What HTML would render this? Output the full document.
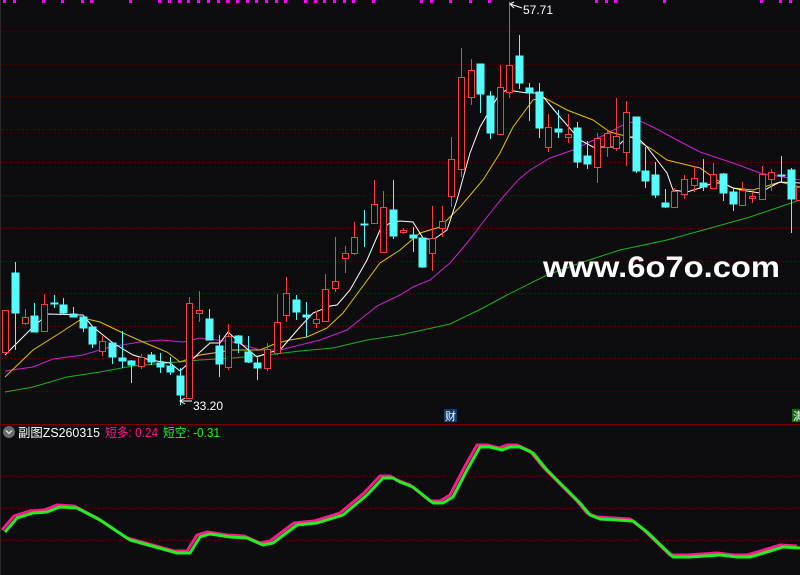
<!DOCTYPE html>
<html><head><meta charset="utf-8"><style>
html,body{margin:0;padding:0;background:#0d0d10;}
svg{display:block}
text{font-family:"Liberation Sans","Noto Sans CJK SC",sans-serif}
</style></head><body>
<svg width="800" height="575" viewBox="0 0 800 575" xmlns="http://www.w3.org/2000/svg">
<rect width="800" height="575" fill="#0d0d10"/>
<line x1="0.5" y1="0" x2="0.5" y2="575" stroke="#2a2a2a"/>
<g stroke="#6e0000" stroke-dasharray="1 3" stroke-width="1">
<line x1="2" y1="31.5" x2="800" y2="31.5"/><line x1="2" y1="64.5" x2="800" y2="64.5"/>
<line x1="2" y1="96.5" x2="800" y2="96.5"/><line x1="2" y1="129.5" x2="800" y2="129.5"/>
<line x1="2" y1="162.5" x2="800" y2="162.5"/><line x1="2" y1="195.5" x2="800" y2="195.5"/>
<line x1="2" y1="228.5" x2="800" y2="228.5"/><line x1="2" y1="261.5" x2="800" y2="261.5"/>
<line x1="2" y1="293.5" x2="800" y2="293.5"/><line x1="2" y1="326.5" x2="800" y2="326.5"/>
<line x1="2" y1="358.5" x2="800" y2="358.5"/><line x1="2" y1="391.5" x2="800" y2="391.5"/>
<line x1="2" y1="476.5" x2="800" y2="476.5"/><line x1="2" y1="508.5" x2="800" y2="508.5"/>
<line x1="2" y1="540.5" x2="800" y2="540.5"/>
</g>
<line x1="0" y1="424.5" x2="800" y2="424.5" stroke="#7a0000"/>
<g fill="#ff00ff">
<rect x="3" y="0" width="3" height="3"/><rect x="13" y="0" width="3" height="3"/><rect x="42" y="0" width="3" height="3"/><rect x="61" y="0" width="3" height="3"/><rect x="81" y="0" width="3" height="3"/><rect x="90" y="0" width="3" height="3"/><rect x="129" y="0" width="3" height="3"/><rect x="158" y="0" width="3" height="3"/><rect x="168" y="0" width="3" height="3"/><rect x="178" y="0" width="3" height="3"/><rect x="187" y="0" width="3" height="3"/><rect x="197" y="0" width="3" height="3"/><rect x="207" y="0" width="3" height="3"/><rect x="217" y="0" width="3" height="3"/><rect x="226" y="0" width="3" height="3"/><rect x="236" y="0" width="3" height="3"/><rect x="246" y="0" width="3" height="3"/><rect x="255" y="0" width="3" height="3"/><rect x="265" y="0" width="3" height="3"/><rect x="275" y="0" width="3" height="3"/><rect x="284" y="0" width="3" height="3"/><rect x="304" y="0" width="3" height="3"/><rect x="314" y="0" width="3" height="3"/><rect x="323" y="0" width="3" height="3"/><rect x="333" y="0" width="3" height="3"/><rect x="343" y="0" width="3" height="3"/><rect x="352" y="0" width="3" height="3"/><rect x="372" y="0" width="3" height="3"/>
<rect x="420" y="0" width="3" height="3"/><rect x="430" y="0" width="3" height="3"/><rect x="449" y="0" width="3" height="3"/><rect x="469" y="0" width="3" height="3"/><rect x="488" y="0" width="3" height="3"/><rect x="595" y="0" width="3" height="3"/><rect x="605" y="0" width="3" height="3"/><rect x="614" y="0" width="3" height="3"/><rect x="663" y="0" width="3" height="3"/><rect x="760" y="0" width="3" height="3"/><rect x="779" y="0" width="3" height="3"/><rect x="789" y="0" width="3" height="3"/>
</g>

<g fill="none" stroke-width="1">
<polyline stroke="#20b020" points="5,392 33,387 67,377 100,372 133,366 167,363 200,360 233,358 267,355 300,351 333,348 367,340 400,335 450,324 483,308 507,295 547,275 583,262 620,250 667,240 707,229 750,217 800,200"/>
<polyline stroke="#d020d0" points="5,371 33,367 53,359 83,355 110,347 140,342 160,340 183,342 200,338 233,342 260,350 280,350 300,345 320,340 347,330 377,306 400,295 413,287 430,280 450,263 467,243 487,217 503,197 518,180 530,170 550,158 573,150 600,137 627,123 640,121 653,127 677,140 700,152 733,163 760,173 800,180"/>
<polyline stroke="#e6c000" points="5,377 33,350 60,333 83,318 100,322 123,333 143,342 167,352 180,362 200,355 220,352 233,350 260,350 277,343 290,340 307,337 327,328 343,313 360,290 380,263 400,250 420,233 440,227 460,207 483,180 500,153 513,127 533,100 543,97 567,110 593,120 610,132 633,138 653,150 667,160 683,164 700,168 720,182 733,188 753,190 767,186 780,182 800,187"/>
<polyline stroke="#ffffff" points="5,355 17,343 33,327 48,314 83,315 93,327 113,343 133,355 150,360 170,363 180,371 190,362 200,352 210,343 220,343 228,332 240,343 257,357 267,353 280,350 300,327 313,313 330,306 337,305 350,290 367,260 380,230 390,223 400,221 413,222 423,238 433,240 447,230 457,200 470,153 480,127 490,110 500,93 507,90 527,93 540,93 560,117 580,140 593,147 617,147 627,137 637,137 647,147 657,160 667,173 673,190 687,192 700,188 713,183 723,183 733,188 747,191 760,193 770,187 780,182 800,183"/>
</g>

<g stroke-width="1">
<g stroke="#ff3c3c" fill="#0d0d10">
<rect x="2.5" y="310.5" width="6" height="42"/>
<line x1="25.5" y1="309" x2="25.5" y2="325"/><rect x="22.5" y="317.5" width="6" height="6"/>
<line x1="44.5" y1="294" x2="44.5" y2="331"/><rect x="41.5" y="304.5" width="6" height="27"/>
<line x1="102.5" y1="336" x2="102.5" y2="356"/><rect x="99.5" y="341.5" width="6" height="10"/>
<line x1="141.5" y1="354" x2="141.5" y2="369"/><rect x="138.5" y="357.5" width="6" height="9"/>
<line x1="189.5" y1="297" x2="189.5" y2="398"/><rect x="186.5" y="303.5" width="6" height="95"/>
<line x1="199.5" y1="291" x2="199.5" y2="322"/><rect x="196.5" y="310.5" width="6" height="3"/>
<line x1="228.5" y1="324" x2="228.5" y2="370"/><rect x="225.5" y="336.5" width="6" height="31"/>
<line x1="267.5" y1="343" x2="267.5" y2="371"/><rect x="264.5" y="349.5" width="6" height="19"/>
<line x1="277.5" y1="294" x2="277.5" y2="355"/><rect x="274.5" y="322.5" width="6" height="31"/>
<line x1="286.5" y1="277" x2="286.5" y2="322"/><rect x="283.5" y="293.5" width="6" height="22"/>
<line x1="316.5" y1="311" x2="316.5" y2="328"/><rect x="313.5" y="319.5" width="6" height="4"/>
<line x1="325.5" y1="274" x2="325.5" y2="322"/><rect x="322.5" y="289.5" width="6" height="32"/>
<line x1="335.5" y1="237" x2="335.5" y2="292"/><rect x="332.5" y="281.5" width="6" height="7"/>
<line x1="345.5" y1="246" x2="345.5" y2="273"/><rect x="342.5" y="253.5" width="6" height="5"/>
<line x1="354.5" y1="222" x2="354.5" y2="255"/><rect x="351.5" y="237.5" width="6" height="16"/>
<line x1="374.5" y1="180" x2="374.5" y2="223"/><rect x="371.5" y="204.5" width="6" height="19"/>
<line x1="383.5" y1="191" x2="383.5" y2="252"/><rect x="380.5" y="207.5" width="6" height="45"/>
<line x1="403.5" y1="228" x2="403.5" y2="234"/><rect x="400.5" y="230.5" width="6" height="2"/>
<line x1="432.5" y1="206" x2="432.5" y2="271"/><rect x="429.5" y="238.5" width="6" height="15"/>
<line x1="442.5" y1="206" x2="442.5" y2="237"/><rect x="439.5" y="221.5" width="6" height="7"/>
<line x1="451.5" y1="137" x2="451.5" y2="207"/><rect x="448.5" y="159.5" width="6" height="37"/>
<line x1="461.5" y1="48" x2="461.5" y2="177"/><rect x="458.5" y="77.5" width="6" height="92"/>
<line x1="471.5" y1="59" x2="471.5" y2="105"/><rect x="468.5" y="70.5" width="6" height="27"/>
<line x1="500.5" y1="65" x2="500.5" y2="135"/><rect x="497.5" y="87.5" width="6" height="47"/>
<line x1="509.5" y1="2" x2="509.5" y2="98"/><rect x="506.5" y="65.5" width="6" height="27"/>
<line x1="548.5" y1="114" x2="548.5" y2="152"/><rect x="545.5" y="127.5" width="6" height="20"/>
<line x1="568.5" y1="114" x2="568.5" y2="143"/><rect x="565.5" y="134.5" width="6" height="3"/>
<line x1="597.5" y1="133" x2="597.5" y2="183"/><rect x="594.5" y="138.5" width="6" height="29"/>
<line x1="607.5" y1="131" x2="607.5" y2="157"/><rect x="604.5" y="133.5" width="6" height="14"/>
<line x1="616.5" y1="98" x2="616.5" y2="151"/><rect x="613.5" y="136.5" width="6" height="12"/>
<line x1="626.5" y1="101" x2="626.5" y2="166"/><rect x="623.5" y="112.5" width="6" height="40"/>
<line x1="674.5" y1="188" x2="674.5" y2="207"/><rect x="671.5" y="191.5" width="6" height="16"/>
<line x1="684.5" y1="175" x2="684.5" y2="199"/><rect x="681.5" y="179.5" width="6" height="15"/>
<line x1="694.5" y1="166" x2="694.5" y2="192"/><rect x="691.5" y="178.5" width="6" height="7"/>
<line x1="713.5" y1="163" x2="713.5" y2="188"/><rect x="710.5" y="174.5" width="6" height="14"/>
<line x1="742.5" y1="182" x2="742.5" y2="206"/><rect x="739.5" y="190.5" width="6" height="15"/>
<line x1="752.5" y1="192" x2="752.5" y2="203"/><rect x="749.5" y="196.5" width="6" height="2"/>
<line x1="762.5" y1="166" x2="762.5" y2="200"/><rect x="759.5" y="174.5" width="6" height="25"/>
<line x1="771.5" y1="169" x2="771.5" y2="191"/><rect x="768.5" y="172.5" width="6" height="7"/>
<rect x="796.5" y="187.5" width="6" height="13"/>
</g>
<g stroke="#54fcfc" fill="#54fcfc">
<line x1="15.5" y1="262" x2="15.5" y2="350"/><rect x="12" y="273" width="7" height="40"/>
<line x1="34.5" y1="303" x2="34.5" y2="332"/><rect x="31" y="316" width="7" height="16"/>
<line x1="54.5" y1="295" x2="54.5" y2="308"/><rect x="51" y="303" width="7" height="1"/>
<line x1="63.5" y1="298" x2="63.5" y2="315"/><rect x="60" y="305" width="7" height="8"/>
<line x1="73.5" y1="307" x2="73.5" y2="317"/><rect x="70" y="314" width="7" height="3"/>
<line x1="83.5" y1="315" x2="83.5" y2="332"/><rect x="80" y="317" width="7" height="11"/>
<line x1="92.5" y1="327" x2="92.5" y2="348"/><rect x="89" y="327" width="7" height="17"/>
<line x1="112.5" y1="343" x2="112.5" y2="364"/><rect x="109" y="343" width="7" height="14"/>
<line x1="122.5" y1="331" x2="122.5" y2="368"/><rect x="119" y="358" width="7" height="3"/>
<line x1="131.5" y1="360" x2="131.5" y2="383"/><rect x="128" y="361" width="7" height="4"/>
<line x1="151.5" y1="352" x2="151.5" y2="365"/><rect x="148" y="355" width="7" height="7"/>
<line x1="160.5" y1="353" x2="160.5" y2="373"/><rect x="157" y="363" width="7" height="4"/>
<line x1="170.5" y1="357" x2="170.5" y2="375"/><rect x="167" y="366" width="7" height="6"/>
<line x1="180.5" y1="368" x2="180.5" y2="405"/><rect x="177" y="376" width="7" height="19"/>
<line x1="209.5" y1="309" x2="209.5" y2="340"/><rect x="206" y="319" width="7" height="21"/>
<line x1="219.5" y1="335" x2="219.5" y2="377"/><rect x="216" y="346" width="7" height="18"/>
<line x1="238.5" y1="335" x2="238.5" y2="353"/><rect x="235" y="336" width="7" height="7"/>
<line x1="248.5" y1="336" x2="248.5" y2="363"/><rect x="245" y="352" width="7" height="10"/>
<line x1="257.5" y1="358" x2="257.5" y2="380"/><rect x="254" y="363" width="7" height="5"/>
<line x1="296.5" y1="295" x2="296.5" y2="320"/><rect x="293" y="300" width="7" height="12"/>
<line x1="306.5" y1="302" x2="306.5" y2="337"/><rect x="303" y="315" width="7" height="2"/>
<line x1="364.5" y1="210" x2="364.5" y2="247"/><rect x="361" y="224" width="7" height="1"/>
<line x1="393.5" y1="180" x2="393.5" y2="239"/><rect x="390" y="210" width="7" height="26"/>
<line x1="413.5" y1="227" x2="413.5" y2="252"/><rect x="410" y="235" width="7" height="3"/>
<line x1="422.5" y1="238" x2="422.5" y2="268"/><rect x="419" y="238" width="7" height="29"/>
<line x1="480.5" y1="64" x2="480.5" y2="113"/><rect x="477" y="64" width="7" height="30"/>
<line x1="490.5" y1="91" x2="490.5" y2="139"/><rect x="487" y="96" width="7" height="37"/>
<line x1="519.5" y1="35" x2="519.5" y2="89"/><rect x="516" y="56" width="7" height="27"/>
<line x1="529.5" y1="83" x2="529.5" y2="121"/><rect x="526" y="88" width="7" height="5"/>
<line x1="539.5" y1="83" x2="539.5" y2="138"/><rect x="536" y="92" width="7" height="36"/>
<line x1="558.5" y1="110" x2="558.5" y2="138"/><rect x="555" y="129" width="7" height="3"/>
<line x1="577.5" y1="122" x2="577.5" y2="168"/><rect x="574" y="128" width="7" height="34"/>
<line x1="587.5" y1="141" x2="587.5" y2="169"/><rect x="584" y="156" width="7" height="8"/>
<line x1="636.5" y1="117" x2="636.5" y2="173"/><rect x="633" y="117" width="7" height="54"/>
<line x1="645.5" y1="147" x2="645.5" y2="188"/><rect x="642" y="171" width="7" height="10"/>
<line x1="655.5" y1="162" x2="655.5" y2="198"/><rect x="652" y="175" width="7" height="20"/>
<line x1="665.5" y1="189" x2="665.5" y2="208"/><rect x="662" y="203" width="7" height="4"/>
<line x1="703.5" y1="159" x2="703.5" y2="191"/><rect x="700" y="183" width="7" height="4"/>
<line x1="723.5" y1="173" x2="723.5" y2="201"/><rect x="720" y="174" width="7" height="19"/>
<line x1="733.5" y1="188" x2="733.5" y2="211"/><rect x="730" y="192" width="7" height="12"/>
<line x1="781.5" y1="156" x2="781.5" y2="182"/><rect x="778" y="175" width="7" height="1"/>
<line x1="791.5" y1="168" x2="791.5" y2="233"/><rect x="788" y="170" width="7" height="29"/>
</g>
</g>

<g stroke="#ffffff" fill="none" stroke-width="1">
<polyline points="514,2 510,4 514,8"/><line x1="510" y1="4" x2="522" y2="8"/>
<polyline points="185,404 180,401 185,398"/><line x1="180" y1="401" x2="192" y2="401"/>
</g>
<text x="523" y="14" font-size="12" fill="#ffffff">57.71</text>
<text x="193" y="410" font-size="12" fill="#ffffff">33.20</text>
<rect x="444" y="409" width="13" height="13" fill="#103c6e"/>
<text x="445" y="420" font-size="11" fill="#ffffff">财</text>
<rect x="792" y="409" width="10" height="13" fill="#106a10"/>
<text x="793" y="420" font-size="11" fill="#ffffff">满</text>

<text x="543" y="277" font-size="30" font-weight="bold" fill="#ffffff" textLength="237" lengthAdjust="spacingAndGlyphs">www.6o7o.com</text>

<circle cx="9" cy="432" r="6" fill="#6a6a6a"/>
<polyline points="6,430.5 9,433.5 12,430.5" fill="none" stroke="#e0e0e0" stroke-width="1.3"/>
<text x="18" y="437" font-size="12.5" fill="#ffffff" textLength="82" lengthAdjust="spacingAndGlyphs">副图ZS260315</text>
<text x="105" y="437" font-size="12.5" fill="#ff1a8c" textLength="53" lengthAdjust="spacingAndGlyphs">短多: 0.24</text>
<text x="163" y="437" font-size="12.5" fill="#22ee22" textLength="57" lengthAdjust="spacingAndGlyphs">短空: -0.31</text>

<g fill="none" stroke-width="3" stroke-linejoin="round">
<polyline stroke="#ff1a8c" transform="translate(-3,-2)" points="5,532 17,518 33,513 47,512 60,507 77,508 100,520 130,540 177,553 190,553 200,537 210,534 230,537 247,538 263,545 273,543 297,525 317,523 343,515 367,495 383,478 393,478 400,482 413,487 433,503 443,503 453,497 467,470 480,447 490,447 502,450 510,447 520,447 533,453 547,470 580,503 590,515 600,519 633,521 647,532 673,557 690,557 720,555 737,557 750,557 767,552 783,547 800,548"/>
<polyline stroke="#22ee22" points="5,532 17,518 33,513 47,512 60,507 77,508 100,520 130,540 177,553 190,553 200,537 210,534 230,537 247,538 263,545 273,543 297,525 317,523 343,515 367,495 383,478 393,478 400,482 413,487 433,503 443,503 453,497 467,470 480,447 490,447 502,450 510,447 520,447 533,453 547,470 580,503 590,515 600,519 633,521 647,532 673,557 690,557 720,555 737,557 750,557 767,552 783,547 800,548"/>
</g>
</svg>
</body></html>
